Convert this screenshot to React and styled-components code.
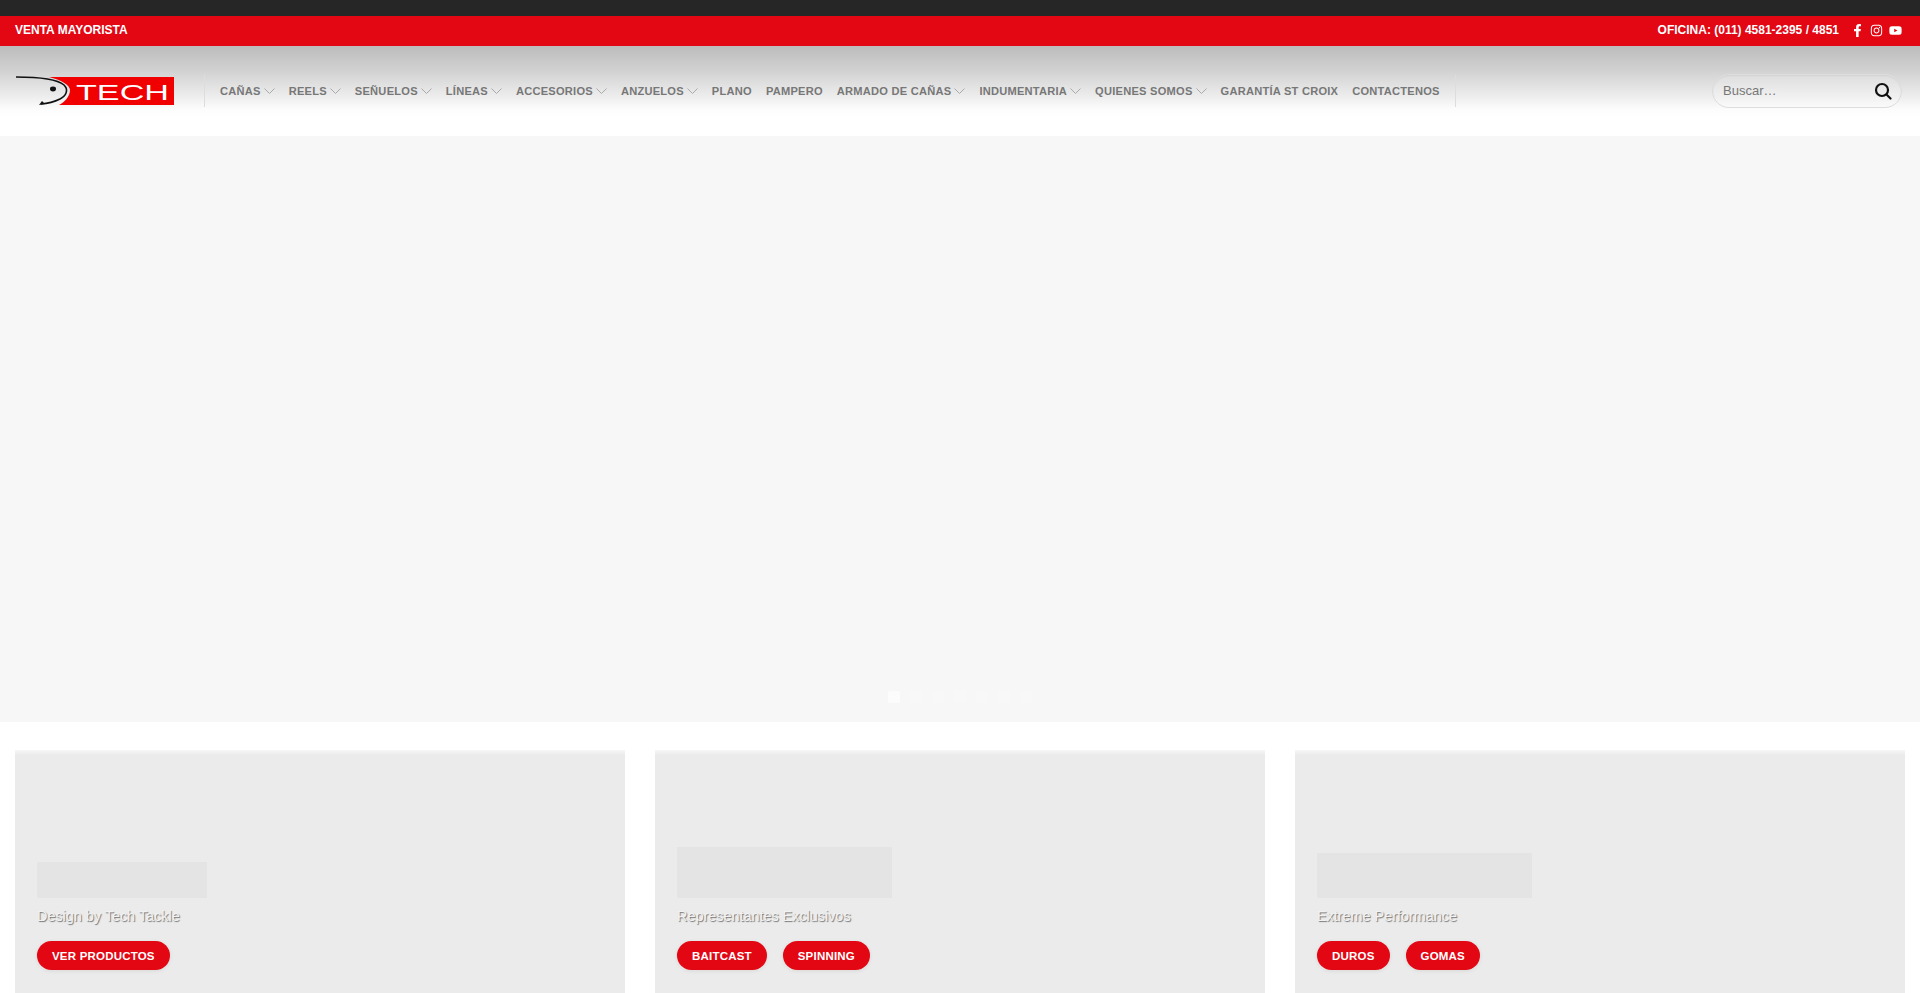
import React from 'react';
import styled, { createGlobalStyle } from 'styled-components';
import { FaFacebookF, FaInstagram, FaYoutube } from 'react-icons/fa';

const Global = createGlobalStyle`
html, body {
    margin: 0;
    padding: 0;
    background: #fff;
    font-family: 'Liberation Sans', Arial, sans-serif;
}
* { box-sizing: border-box; }
`
const Strip = styled.div`
height: 16px;
background-color: #262626;
`
const TopBar = styled.div`
height: 30px;
padding: 0 18px 2px 15px;
display: flex;
align-items: center;
justify-content: space-between;
background-color: #e30613;
color: #fff;
font-size: 12px;
font-weight: 700;
`
const TopRight = styled.div`
display: flex;
align-items: center;
gap: 12px;
`
const Socials = styled.div`
display: flex;
align-items: center;
gap: 6px;
font-size: 13px;
svg { display: block; }
`
const Header = styled.header`
height: 90px;
padding: 0 15px;
display: flex;
align-items: center;
background: linear-gradient(180deg, #bcbcbc 0%, #d2d2d2 28%, #ececec 55%, #fcfcfc 70%, #fff 80%);
`
const Logo = styled.svg`
display: block;
width: 160px;
height: 30px;
`
const Nav = styled.nav`
margin-left: 29px;
height: 32px;
padding: 0 15px;
display: flex;
align-items: center;
gap: 14px;
border-left: 1px solid #ddd;
border-right: 1px solid #ddd;
`
const NavLink = styled.a`
display: flex;
align-items: center;
gap: 3px;
font-size: 11.1px;
font-weight: 700;
letter-spacing: 0.24px;
color: #777;
white-space: nowrap;
`
const Chevron = styled.svg`
width: 11px;
height: 6px;
fill: none;
stroke: #aaa;
stroke-width: 1;
`
const Search = styled.div`
margin: -1px 3px 0 auto;
width: 190px;
height: 34px;
padding: 0 9px 0 10px;
display: flex;
align-items: center;
justify-content: space-between;
border: 1px solid #ddd;
border-radius: 99px;
background: rgba(255, 255, 255, 0.2);
box-shadow: inset 0 1px 2px rgba(0, 0, 0, 0.06);
font-size: 13px;
color: #777;
`
const SearchIcon = styled.svg`
width: 18px;
height: 18px;
fill: none;
stroke: #111;
stroke-width: 2.2;
stroke-linecap: round;
`
const Hero = styled.section`
position: relative;
height: 586px;
background-color: #f7f7f7;
`
const Dots = styled.div`
position: absolute;
left: 888px;
bottom: 19px;
display: flex;
gap: 10px;
`
const Dot = styled.span`
width: 12px;
height: 12px;
border-radius: 2px;
background-color: ${(p) => (p.$active ? '#fcfcfc' : '#f8f8f8')};
`
const Cards = styled.section`
padding: 28px 15px 0;
display: grid;
grid-template-columns: repeat(3, 610px);
gap: 30px;
`
const Card = styled.article`
height: 243px;
padding: 0 22px 23px;
display: flex;
flex-direction: column;
align-items: flex-start;
justify-content: flex-end;
background: linear-gradient(180deg, #f7f7f7 0, #ebebeb 5px);
`
const Placeholder = styled.div`
width: ${(p) => p.$w}px;
height: ${(p) => p.$h}px;
background-color: #e4e4e4;
`
const Tagline = styled.p`
margin: 8px 0 15px;
font-size: 14.4px;
line-height: 20px;
color: #f2f2f2;
text-shadow: 1px 1px 1px rgba(0, 0, 0, 0.5);
`
const Buttons = styled.div`
display: flex;
gap: 16px;
`
const Button = styled.a`
height: 29px;
padding: 0 15px;
display: flex;
align-items: center;
border-radius: 99px;
background-color: #e30613;
box-shadow: 0 1px 4px rgba(0, 0, 0, 0.08);
color: #fff;
font-size: 11.5px;
font-weight: 700;
letter-spacing: 0.2px;
`

const menu = [
    ['CAÑAS', true],
    ['REELS', true],
    ['SEÑUELOS', true],
    ['LÍNEAS', true],
    ['ACCESORIOS', true],
    ['ANZUELOS', true],
    ['PLANO', false],
    ['PAMPERO', false],
    ['ARMADO DE CAÑAS', true],
    ['INDUMENTARIA', true],
    ['QUIENES SOMOS', true],
    ['GARANTÍA ST CROIX', false],
    ['CONTACTENOS', false],
];

const cards = [
    { w: 170, h: 36, text: 'Design by Tech Tackle', buttons: ['VER PRODUCTOS'] },
    { w: 215, h: 51, text: 'Representantes Exclusivos', buttons: ['BAITCAST', 'SPINNING'] },
    { w: 215, h: 45, text: 'Extreme Performance', buttons: ['DUROS', 'GOMAS'] },
];

function TechLogo() {
    return (
        <Logo viewBox="0 0 160 30">
            <path d="M34 1H159V29H44C50 26 55 20 55 14C55 9 46 4 34 1Z" fill="#f00000" />
            <path d="M1 1C20 1 42 3 49 9C54 14 51 20 45 23C39 26 33 27.500 26 28" fill="none" stroke="#111" strokeWidth="1.6" />
            <path d="M24 29L27 25L30 28Z" fill="#111" />
            <ellipse cx="38" cy="13" rx="3" ry="2.4" fill="#111" />
            <text x="61" y="23.500" fontSize="22" fill="#fff" fontFamily="'Liberation Sans', sans-serif" textLength="93" lengthAdjust="spacingAndGlyphs">TECH</text>
        </Logo>
    );
}

export default function App() {
    return (
        <>
            <Global />
            <Strip />
            <TopBar>
                <span>VENTA MAYORISTA</span>
                <TopRight>
                    <span>OFICINA: (011) 4581-2395 / 4851</span>
                    <Socials>
                        <FaFacebookF />
                        <FaInstagram />
                        <FaYoutube />
                    </Socials>
                </TopRight>
            </TopBar>
            <Header>
                <TechLogo />
                <Nav>
                    {menu.map(([label, sub]) => (
                        <NavLink key={label}>
                            {label}
                            {sub && (
                                <Chevron viewBox="0 0 11 6">
                                    <polyline points="0.5,0.5 5.5,5.5 10.5,0.5" />
                                </Chevron>
                            )}
                        </NavLink>
                    ))}
                </Nav>
                <Search>
                    <span>Buscar…</span>
                    <SearchIcon viewBox="0 0 18 18">
                        <circle cx="8" cy="8" r="6" />
                        <line x1="12.5" y1="12.5" x2="16.5" y2="16.5" />
                    </SearchIcon>
                </Search>
            </Header>
            <Hero>
                <Dots>
                    {[0, 1, 2, 3, 4, 5, 6].map((i) => (
                        <Dot key={i} $active={i === 0} />
                    ))}
                </Dots>
            </Hero>
            <Cards>
                {cards.map((card) => (
                    <Card key={card.text}>
                        <Placeholder $w={card.w} $h={card.h} />
                        <Tagline>{card.text}</Tagline>
                        <Buttons>
                            {card.buttons.map((b) => (
                                <Button key={b}>{b}</Button>
                            ))}
                        </Buttons>
                    </Card>
                ))}
            </Cards>
        </>
    );
}
